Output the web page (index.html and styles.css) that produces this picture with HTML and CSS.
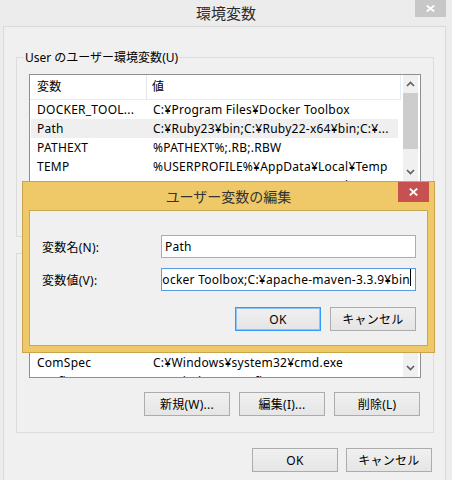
FILE: index.html
```html
<!DOCTYPE html>
<html lang="ja">
<head>
<meta charset="utf-8">
<title>環境変数</title>
<link rel="stylesheet" href="styles.css">
</head>
<body>
<div class="window">
  <div class="titlebar">
    <span class="title">環境変数</span>
    <span class="close-main"><svg width="9" height="7" viewBox="0 0 9 7"><path d="M0.8 0.6 L8.2 6.4 M8.2 0.6 L0.8 6.4" stroke="#fff" stroke-width="1.9" fill="none"/></svg></span>
  </div>
  <div class="panel">
    <div class="group">
      <div class="group-label">User のユーザー環境変数(U)</div>
      <div class="list">
        <div class="list-body">
          <div class="list-header"><span class="c1">変数</span><span class="c2">値</span></div>
          <div class="row"><span class="c1">DOCKER_TOOL...</span><span class="c2">C:¥Program Files¥Docker Toolbox</span></div>
          <div class="row sel"><span class="c1">Path</span><span class="c2">C:¥Ruby23¥bin;C:¥Ruby22-x64¥bin;C:¥...</span></div>
          <div class="row"><span class="c1">PATHEXT</span><span class="c2">%PATHEXT%;.RB;.RBW</span></div>
          <div class="row"><span class="c1">TEMP</span><span class="c2">%USERPROFILE%¥AppData¥Local¥Temp</span></div>
          <div class="row"><span class="c1">TMP</span><span class="c2">%USERPROFILE%¥AppData¥Local¥Temp</span></div>
        </div>
        <div class="scrollbar">
          <div class="arrow"><svg width="9" height="6" viewBox="0 0 9 6"><path d="M1 5 L4.5 1.5 L8 5" stroke="#606060" stroke-width="1.7" fill="none"/></svg></div>
          <div class="track"><div class="thumb"></div></div>
          <div class="arrow"><svg width="9" height="6" viewBox="0 0 9 6"><path d="M1 1 L4.5 4.5 L8 1" stroke="#606060" stroke-width="1.7" fill="none"/></svg></div>
        </div>
      </div>
      <div class="btn-row">
        <span class="btn">新規(N)...</span>
        <span class="btn">編集(E)...</span>
        <span class="btn">削除(D)</span>
      </div>
    </div>

    <div class="group group-sys">
      <div class="group-label">システム環境変数(S)</div>
      <div class="list">
        <div class="list-body">
          <div class="list-header"><span class="c1">変数</span><span class="c2">値</span></div>
          <div class="row"><span class="c1">asl.log</span><span class="c2">Destination=file</span></div>
          <div class="row"><span class="c1">ChocolateyInstall</span><span class="c2">C:¥ProgramData¥chocolatey</span></div>
          <div class="row"><span class="c1">classpath</span><span class="c2">.;C:¥Program Files¥Java¥jre¥lib</span></div>
          <div class="row"><span class="c1">ComSpec</span><span class="c2">C:¥Windows¥system32¥cmd.exe</span></div>
          <div class="row"><span class="c1">configsetroot</span><span class="c2">C:¥Windows¥ConfigSetRoot</span></div>
        </div>
        <div class="scrollbar">
          <div class="arrow"><svg width="9" height="6" viewBox="0 0 9 6"><path d="M1 5 L4.5 1.5 L8 5" stroke="#606060" stroke-width="1.7" fill="none"/></svg></div>
          <div class="track"><div class="thumb thumb-sys"></div></div>
          <div class="arrow"><svg width="9" height="6" viewBox="0 0 9 6"><path d="M1 1 L4.5 4.5 L8 1" stroke="#606060" stroke-width="1.7" fill="none"/></svg></div>
        </div>
      </div>
      <div class="btn-row">
        <span class="btn">新規(W)...</span>
        <span class="btn">編集(I)...</span>
        <span class="btn">削除(L)</span>
      </div>
    </div>

    <div class="footer">
      <span class="btn">OK</span>
      <span class="btn">キャンセル</span>
    </div>
  </div>

  <div class="dialog">
    <div class="dlg-titlebar">
      <span class="dlg-title">ユーザー変数の編集</span>
      <span class="close-dlg"><svg width="9" height="8" viewBox="0 0 9 8"><path d="M0.8 0.6 L8.2 7.4 M8.2 0.6 L0.8 7.4" stroke="#fff" stroke-width="1.9" fill="none"/></svg></span>
    </div>
    <div class="dlg-panel">
      <div class="form">
        <span class="lbl">変数名(N):</span>
        <div class="input"><span class="input-text">Path</span></div>
        <span class="lbl">変数値(V):</span>
        <div class="input focused"><span class="input-text">Docker Toolbox;C:¥apache-maven-3.3.9¥bin</span><span class="caret"></span></div>
      </div>
      <div class="dlg-buttons">
        <span class="btn default">OK</span>
        <span class="btn">キャンセル</span>
      </div>
    </div>
  </div>
</div>
</body>
</html>
```

FILE: styles.css
```css
* { box-sizing: border-box; }

html, body {
  margin: 0;
  padding: 0;
}

body {
  background: #ececec;
  font-family: "Noto Sans", "Noto Sans CJK JP", sans-serif;
  font-size: 12px;
  letter-spacing: 0.25px;
  color: #000;
}

.window {
  position: relative;
  width: 452px;
  height: 480px;
  overflow: hidden;
  background: #ececec;
}

.titlebar {
  height: 26px;
  display: grid;
  grid-template-columns: 1fr auto 1fr;
  align-items: start;
}

.title {
  grid-column: 2;
  font-size: 15px;
  line-height: 26px;
  letter-spacing: 0;
  color: #2b2b2b;
}

.close-main {
  grid-column: 3;
  justify-self: end;
  margin-right: 6px;
  width: 31px;
  height: 17px;
  background: #c7c7c7;
  display: flex;
  align-items: center;
  justify-content: center;
}

.panel {
  margin-left: 3px;
  width: 443px;
  height: 454px;
  background: #f0f0f0;
  border: 1px solid #dadada;
  border-bottom: none;
  padding: 30px 11px 0 12px;
}

.group {
  border: 1px solid #dcdcdc;
  padding: 0 12px 16px 12px;
}

.group-sys {
  margin-top: 16px;
}

.group-label {
  margin: -8px 0 0 -5px;
  padding: 0 1px;
  width: max-content;
  background: #f0f0f0;
  line-height: 16px;
  height: 16px;
  letter-spacing: 0;
}

.list {
  margin-top: 8px;
  height: 108px;
  border: 1px solid #8f8f8f;
  background: #fff;
  display: flex;
}

.list-body {
  flex: 1;
  overflow: hidden;
  white-space: nowrap;
}

.list-header {
  display: flex;
  height: 25px;
  line-height: 23px;
  border-bottom: 1px solid #e3ebf5;
  border-right: 1px solid #e3ebf5;
  margin-right: 1px;
}

.list-header .c1 {
  width: 117px;
  padding-left: 7px;
  border-right: 1px solid #e5e5e5;
}

.list-header .c2 {
  padding-left: 5px;
}

.row {
  display: flex;
  height: 19px;
  line-height: 19px;
  margin: 0 4px 0 1px;
}

.row .c1 {
  width: 117px;
  padding-left: 6px;
  overflow: hidden;
}

.row .c2 {
  padding-left: 5px;
}

.row.sel {
  background: #efefef;
}

.scrollbar {
  width: 18px;
  padding: 0 2px 0 1px;
  display: flex;
  flex-direction: column;
  background: #fff;
}

.arrow {
  height: 18px;
  background: #f0f0f0;
  display: flex;
  align-items: center;
  justify-content: center;
}

.track {
  flex: 1;
  background: #f0f0f0;
}

.thumb {
  height: 56px;
  background: #cdcdcd;
}

.thumb-sys {
  height: 20px;
}

.btn-row {
  display: flex;
  justify-content: flex-end;
  gap: 9px;
  margin-top: 14px;
  padding-right: 1px;
}

.btn {
  width: 86px;
  height: 24px;
  display: flex;
  align-items: center;
  justify-content: center;
  border: 1px solid #acacac;
  background: linear-gradient(#f0f0f0, #e5e5e5);
  color: #000;
}

.footer {
  display: flex;
  justify-content: flex-end;
  gap: 8px;
  margin-top: 15px;
  padding-right: 2px;
}

/* Edit dialog */
.dialog {
  position: absolute;
  left: 22px;
  top: 181px;
  width: 413px;
  height: 172px;
  background: #efc867;
  border: 1px solid #c9a44c;
  display: flex;
  flex-direction: column;
}

.dlg-titlebar {
  height: 28px;
  display: grid;
  grid-template-columns: 1fr auto 1fr;
  align-items: start;
}

.dlg-title {
  grid-column: 2;
  font-size: 14px;
  line-height: 20px;
  margin-top: 5px;
  letter-spacing: 0;
  color: #333;
}

.close-dlg {
  grid-column: 3;
  justify-self: end;
  margin-right: 5px;
  width: 31px;
  height: 20px;
  background: #c75050;
  display: flex;
  align-items: center;
  justify-content: center;
}

.dlg-panel {
  flex: 1;
  margin: 0 6px 6px 6px;
  background: #f0f0f0;
  border: 1px solid #c9a853;
  padding: 24px 11px 0 12px;
}

.form {
  display: grid;
  grid-template-columns: 119px 1fr;
  row-gap: 10px;
  align-items: center;
}

.input {
  height: 23px;
  border: 1px solid #abadb3;
  background: #fff;
  display: flex;
  align-items: center;
  padding: 0 3px;
  overflow: hidden;
  white-space: nowrap;
}

.input.focused {
  border-color: #569de5;
  justify-content: flex-end;
  padding: 0 4px 0 0;
}

.input-text {
  flex: none;
}

.caret {
  flex: none;
  width: 1px;
  height: 17px;
  background: #000;
  align-self: flex-start;
}

.dlg-buttons {
  display: flex;
  justify-content: flex-end;
  gap: 9px;
  margin-top: 16px;
}

.btn.default {
  border-color: #3399ff;
  box-shadow: inset 0 0 0 1px #8ec3f7;
}
```
